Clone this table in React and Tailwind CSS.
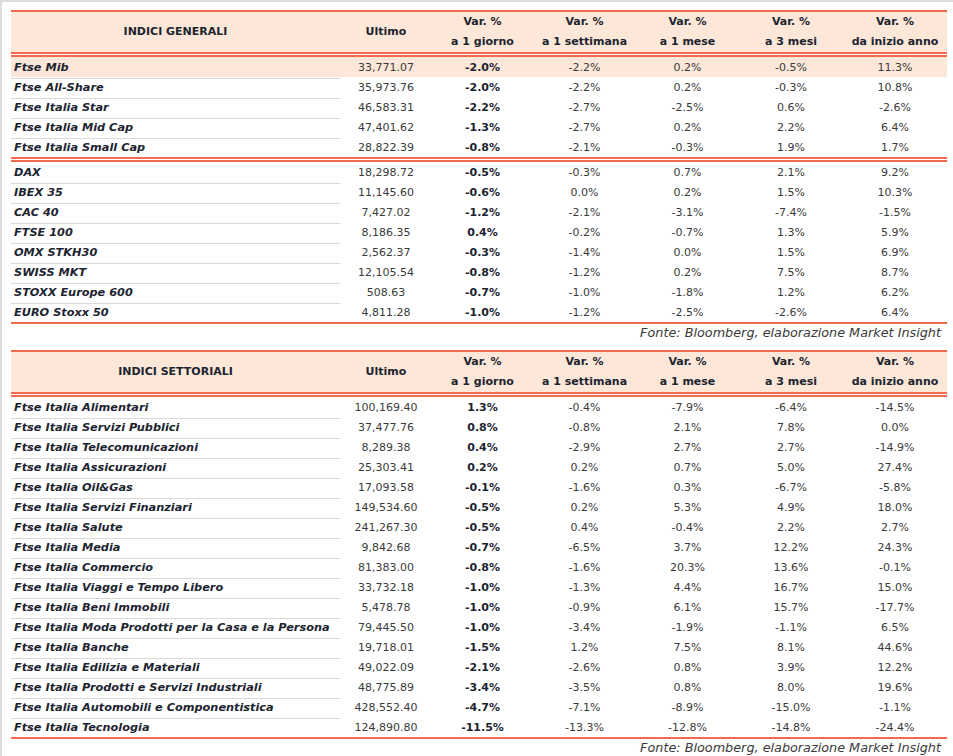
import React from "react";

const RED = "bg-[#f2694e]";

const generali = [
  ["Ftse Mib", "33,771.07", "-2.0%", "-2.2%", "0.2%", "-0.5%", "11.3%"],
  ["Ftse All-Share", "35,973.76", "-2.0%", "-2.2%", "0.2%", "-0.3%", "10.8%"],
  ["Ftse Italia Star", "46,583.31", "-2.2%", "-2.7%", "-2.5%", "0.6%", "-2.6%"],
  ["Ftse Italia Mid Cap", "47,401.62", "-1.3%", "-2.7%", "0.2%", "2.2%", "6.4%"],
  ["Ftse Italia Small Cap", "28,822.39", "-0.8%", "-2.1%", "-0.3%", "1.9%", "1.7%"],
];

const esteri = [
  ["DAX", "18,298.72", "-0.5%", "-0.3%", "0.7%", "2.1%", "9.2%"],
  ["IBEX 35", "11,145.60", "-0.6%", "0.0%", "0.2%", "1.5%", "10.3%"],
  ["CAC 40", "7,427.02", "-1.2%", "-2.1%", "-3.1%", "-7.4%", "-1.5%"],
  ["FTSE 100", "8,186.35", "0.4%", "-0.2%", "-0.7%", "1.3%", "5.9%"],
  ["OMX STKH30", "2,562.37", "-0.3%", "-1.4%", "0.0%", "1.5%", "6.9%"],
  ["SWISS MKT", "12,105.54", "-0.8%", "-1.2%", "0.2%", "7.5%", "8.7%"],
  ["STOXX Europe 600", "508.63", "-0.7%", "-1.0%", "-1.8%", "1.2%", "6.2%"],
  ["EURO Stoxx 50", "4,811.28", "-1.0%", "-1.2%", "-2.5%", "-2.6%", "6.4%"],
];

const settoriali = [
  ["Ftse Italia Alimentari", "100,169.40", "1.3%", "-0.4%", "-7.9%", "-6.4%", "-14.5%"],
  ["Ftse Italia Servizi Pubblici", "37,477.76", "0.8%", "-0.8%", "2.1%", "7.8%", "0.0%"],
  ["Ftse Italia Telecomunicazioni", "8,289.38", "0.4%", "-2.9%", "2.7%", "2.7%", "-14.9%"],
  ["Ftse Italia Assicurazioni", "25,303.41", "0.2%", "0.2%", "0.7%", "5.0%", "27.4%"],
  ["Ftse Italia Oil&Gas", "17,093.58", "-0.1%", "-1.6%", "0.3%", "-6.7%", "-5.8%"],
  ["Ftse Italia Servizi Finanziari", "149,534.60", "-0.5%", "0.2%", "5.3%", "4.9%", "18.0%"],
  ["Ftse Italia Salute", "241,267.30", "-0.5%", "0.4%", "-0.4%", "2.2%", "2.7%"],
  ["Ftse Italia Media", "9,842.68", "-0.7%", "-6.5%", "3.7%", "12.2%", "24.3%"],
  ["Ftse Italia Commercio", "81,383.00", "-0.8%", "-1.6%", "20.3%", "13.6%", "-0.1%"],
  ["Ftse Italia Viaggi e Tempo Libero", "33,732.18", "-1.0%", "-1.3%", "4.4%", "16.7%", "15.0%"],
  ["Ftse Italia Beni Immobili", "5,478.78", "-1.0%", "-0.9%", "6.1%", "15.7%", "-17.7%"],
  ["Ftse Italia Moda Prodotti per la Casa e la Persona", "79,445.50", "-1.0%", "-3.4%", "-1.9%", "-1.1%", "6.5%"],
  ["Ftse Italia Banche", "19,718.01", "-1.5%", "1.2%", "7.5%", "8.1%", "44.6%"],
  ["Ftse Italia Edilizia e Materiali", "49,022.09", "-2.1%", "-2.6%", "0.8%", "3.9%", "12.2%"],
  ["Ftse Italia Prodotti e Servizi Industriali", "48,775.89", "-3.4%", "-3.5%", "0.8%", "8.0%", "19.6%"],
  ["Ftse Italia Automobili e Componentistica", "428,552.40", "-4.7%", "-7.1%", "-8.9%", "-15.0%", "-1.1%"],
  ["Ftse Italia Tecnologia", "124,890.80", "-11.5%", "-13.3%", "-12.8%", "-14.8%", "-24.4%"],
];

const cols = "grid grid-cols-[329px_92px_101px_103px_103px_104px_104px]";

const DoubleLine = () => (
  <div>
    <div className={`h-[2px] ${RED}`} />
    <div className="h-[1px] bg-white" />
    <div className={`h-[2px] ${RED}`} />
  </div>
);

const Header = ({ title }) => (
  <div className={`${cols} h-[40px] bg-[#fce7d9] font-bold text-[11px] text-[#1c2430] items-center text-center`}>
    <div className="uppercase">{title}</div>
    <div>Ultimo</div>
    <VarHead sub="a 1 giorno" />
    <VarHead sub="a 1 settimana" />
    <VarHead sub="a 1 mese" />
    <VarHead sub="a 3 mesi" />
    <VarHead sub="da inizio anno" />
  </div>
);

const VarHead = ({ sub }) => (
  <div className="flex flex-col leading-[20px]">
    <span>Var. %</span>
    <span>{sub}</span>
  </div>
);

const Row = ({ row, highlight, last }) => (
  <div className={`${cols} h-[20px] text-[11px] leading-[21px] text-center ${highlight ? "bg-[#fce7d9]" : ""}`}>
    <div
      className={`text-left pl-[3px] font-bold italic text-[11.3px] text-[#1c2430] whitespace-nowrap ${
        last ? "" : "border-b border-[#d9d9d9]"
      }`}
    >
      {row[0]}
    </div>
    <div className="text-[#3a3a3a]">{row[1]}</div>
    <div className="font-bold text-[#1c2430]">{row[2]}</div>
    <div className="text-[#3a3a3a]">{row[3]}</div>
    <div className="text-[#3a3a3a]">{row[4]}</div>
    <div className="text-[#3a3a3a]">{row[5]}</div>
    <div className="text-[#3a3a3a]">{row[6]}</div>
  </div>
);

const Fonte = () => (
  <div className="h-[17px] leading-[17px] text-right pr-[6px] italic text-[12.8px] text-[#3a3a3a] whitespace-nowrap">
    Fonte: Bloomberg, elaborazione Market Insight
  </div>
);

export default function App() {
  return (
    <div
      className="min-h-screen bg-white border-l-2 border-t-2 border-[#dcdcdc] pl-[9px] pt-[8px]"
      style={{ fontFamily: '"DejaVu Sans", Verdana, sans-serif' }}
    >
      <div className="w-[936px]">
        <div className={`h-[2px] ${RED}`} />
        <Header title="Indici generali" />
        <DoubleLine />
        {generali.map((r, i) => (
          <Row key={r[0]} row={r} highlight={i === 0} last={i === generali.length - 1} />
        ))}
        <DoubleLine />
        {esteri.map((r, i) => (
          <Row key={r[0]} row={r} last={i === esteri.length - 1} />
        ))}
        <div className={`h-[2px] ${RED}`} />
        <Fonte />

        <div className={`h-[2px] ${RED} mt-[9px]`} />
        <Header title="Indici settoriali" />
        <DoubleLine />
        {settoriali.map((r, i) => (
          <Row key={r[0]} row={r} last={i === settoriali.length - 1} />
        ))}
        <div className={`h-[2px] ${RED}`} />
        <Fonte />
      </div>
    </div>
  );
}
